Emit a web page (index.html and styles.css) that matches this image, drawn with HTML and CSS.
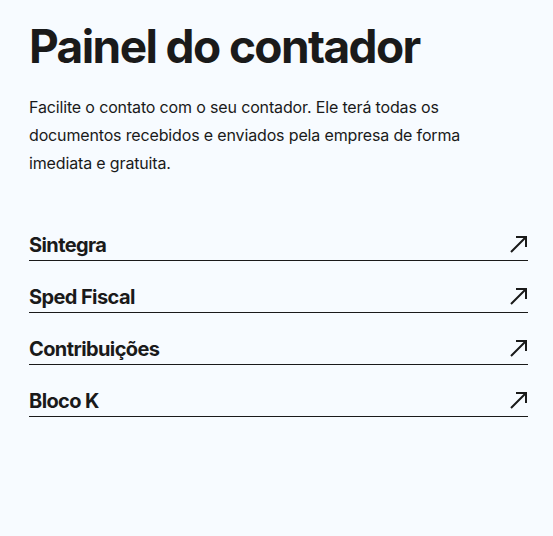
FILE: index.html
```html
<!DOCTYPE html>
<html lang="pt-BR">
<head>
<meta charset="utf-8">
<link rel="stylesheet" href="styles.css">
</head>
<body>
<main class="panel">
  <h1 class="title">Painel do contador</h1>
  <p class="lead">Facilite o contato com o seu contador. Ele terá todas os documentos recebidos e enviados pela empresa de forma imediata e gratuita.</p>
  <ul class="links">
    <li class="link-row"><span class="link-label">Sintegra</span><svg class="arrow" viewBox="0 0 18 18" width="18" height="18"><path d="M1 17 L16 2 M6 2 H16 V12" fill="none" stroke="#1a1a1a" stroke-width="2"/></svg></li>
    <li class="link-row"><span class="link-label">Sped Fiscal</span><svg class="arrow" viewBox="0 0 18 18" width="18" height="18"><path d="M1 17 L16 2 M6 2 H16 V12" fill="none" stroke="#1a1a1a" stroke-width="2"/></svg></li>
    <li class="link-row"><span class="link-label">Contribuições</span><svg class="arrow" viewBox="0 0 18 18" width="18" height="18"><path d="M1 17 L16 2 M6 2 H16 V12" fill="none" stroke="#1a1a1a" stroke-width="2"/></svg></li>
    <li class="link-row"><span class="link-label">Bloco K</span><svg class="arrow" viewBox="0 0 18 18" width="18" height="18"><path d="M1 17 L16 2 M6 2 H16 V12" fill="none" stroke="#1a1a1a" stroke-width="2"/></svg></li>
  </ul>
</main>
</body>
</html>
```

FILE: styles.css
```css
html, body {
  margin: 0;
  background: #f7fbff;
}
body {
  font-family: Inter, "Noto Sans", sans-serif;
  color: #1a1a1a;
}
.panel {
  padding: 18px 25px 0 29px;
}
.title {
  margin: 0;
  font-size: 46px;
  font-weight: 700;
  letter-spacing: -1.6px;
  line-height: 56px;
}
.lead {
  margin: 19px 0 0 0;
  font-size: 16px;
  line-height: 28px;
  letter-spacing: -0.15px;
  max-width: 450px;
}
.links {
  list-style: none;
  margin: 32px 0 0 0;
  padding: 0;
}
.link-row {
  display: flex;
  justify-content: space-between;
  align-items: flex-end;
  height: 51px;
  border-bottom: 1px solid #1a1a1a;
}
.link-label {
  font-size: 20px;
  line-height: 24px;
  font-weight: 700;
  letter-spacing: -0.6px;
  padding-bottom: 3px;
}
.arrow {
  display: block;
  margin-bottom: 7px;
}
```
